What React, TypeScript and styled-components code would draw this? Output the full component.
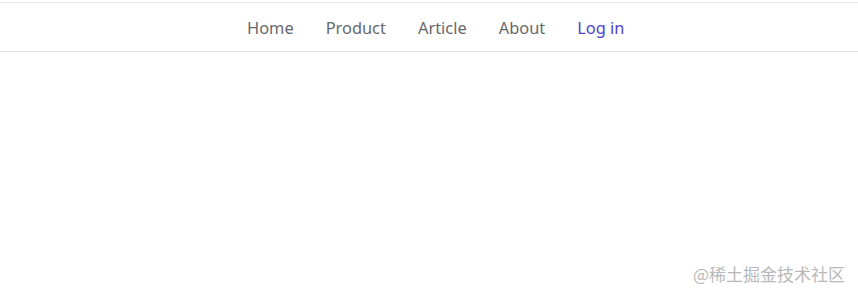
import React from "react";
import styled, { createGlobalStyle } from "styled-components";

const Global = createGlobalStyle`
  html, body { margin: 0; padding: 0; background: #fff; }
  body { font-family: "Noto Sans", "Noto Sans CJK SC", sans-serif; }
`;

const Page = styled.div`
  width: 858px;
  height: 300px;
  display: flex;
  flex-direction: column;
  padding-top: 2px;
  box-sizing: border-box;
  position: relative;
`;

const NavBar = styled.nav`
  height: 46px;
  box-sizing: content-box;
  border-top: 1px solid #e8e8e8;
  border-bottom: 1px solid #e4e4e4;
  display: flex;
  align-items: center;
  justify-content: flex-start;
  padding: 2px 0 0 247px;
  gap: 32px;
`;

const NavLink = styled.a<{ $active?: boolean }>`
  font-size: 16.4px;
  color: ${(p) => (p.$active ? "#4d43cc" : "#66686c")};
  text-decoration: none;
  line-height: 1;
  cursor: pointer;
`;

const Watermark = styled.div`
  position: absolute;
  right: 13px;
  bottom: 14px;
  font-size: 17px;
  color: #b8b8b8;
  font-family: "Noto Sans CJK SC", sans-serif;
`;

export default function App() {
  const items = ["Home", "Product", "Article", "About"];
  return (
    <>
      <Global />
      <Page>
        <NavBar>
          {items.map((i) => (
            <NavLink key={i}>{i}</NavLink>
          ))}
          <NavLink $active>Log in</NavLink>
        </NavBar>
        <Watermark>@稀土掘金技术社区</Watermark>
      </Page>
    </>
  );
}
